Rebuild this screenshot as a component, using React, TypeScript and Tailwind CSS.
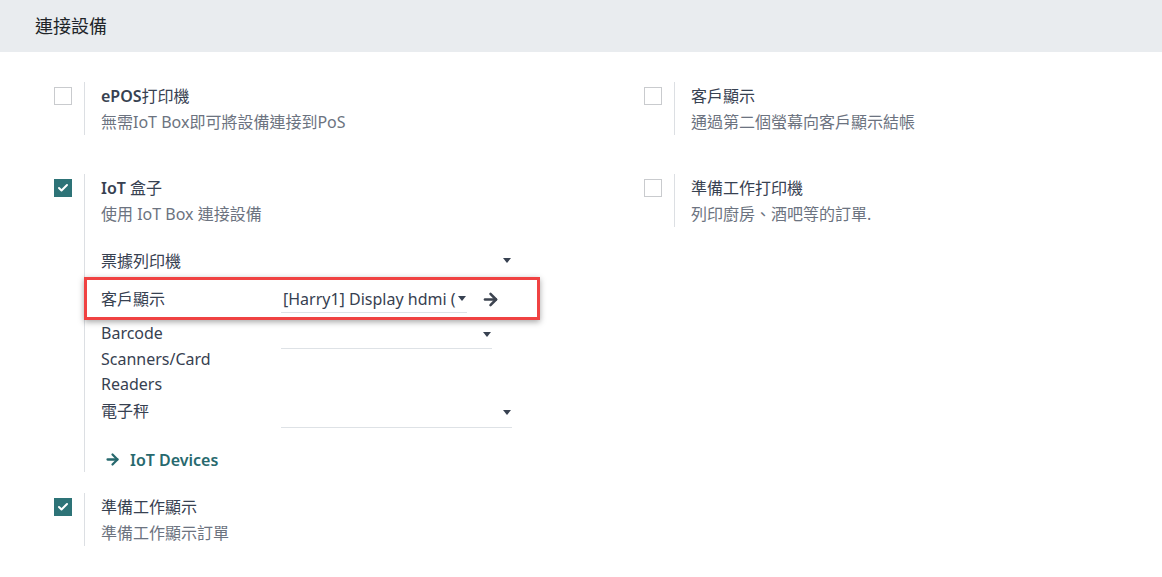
import { Check, ArrowRight } from "lucide-react";
import type { ReactNode } from "react";

function Checkbox({ checked }: { checked?: boolean }) {
  if (checked) {
    return (
      <div className="mt-[5px] flex h-[18px] w-[18px] items-center justify-center bg-[#2d7377]">
        <Check className="h-[12px] w-[12px] text-white" strokeWidth={4} />
      </div>
    );
  }
  return <div className="mt-[5px] h-[18px] w-[18px] border border-[#c9cbce] bg-white" />;
}

function Caret() {
  return (
    <span className="h-0 w-0 border-x-[4px] border-t-[5px] border-x-transparent border-t-[#374151]" />
  );
}

interface SettingProps {
  checked?: boolean;
  title: ReactNode;
  desc: string;
  children?: ReactNode;
}

function Setting({ checked, title, desc, children }: SettingProps) {
  return (
    <div className="flex">
      <div className="w-[30px] shrink-0">
        <Checkbox checked={checked} />
      </div>
      <div className="border-l border-[#dcdfe3] pl-4">
        <div className="pt-px text-[16px] leading-[26px] text-[#374151]">{title}</div>
        <div className="text-[16px] leading-[26px] text-[#6c7380]">{desc}</div>
        {children}
      </div>
    </div>
  );
}

export default function App() {
  return (
    <div className="min-h-[577px] bg-white font-['Noto_Sans','Noto_Sans_CJK_TC',sans-serif] text-[#374151]">
      {/* Section header */}
      <div className="flex h-[52px] items-center bg-[#e9ecef] pl-[35px]">
        <h2 className="text-[18px] text-[#212529]">連接設備</h2>
      </div>

      <div className="grid grid-cols-[590px_1fr] pl-[54px] pt-[30px]">
        {/* Left column */}
        <div className="flex flex-col">
          <Setting
            title={
              <>
                <span className="font-semibold">ePOS</span>打印機
              </>
            }
            desc="無需IoT Box即可將設備連接到PoS"
          />

          <div className="mt-[39px]">
            <Setting
              checked
              title={
                <>
                  <span className="font-semibold">IoT</span> 盒子
                </>
              }
              desc="使用 IoT Box 連接設備"
            >
              <div className="mt-[16px] text-[16px]">
                {/* 票據列印機 */}
                <div className="flex h-[36px] items-center">
                  <div className="w-[180px]">票據列印機</div>
                  <div className="flex h-full w-[231px] items-center justify-end border-b border-[#dee2e6] pr-px">
                    <Caret />
                  </div>
                </div>

                {/* 客戶顯示, highlighted */}
                <div className="relative flex h-[40px] items-center">
                  <div className="w-[180px]">客戶顯示</div>
                  <div className="flex h-[28px] w-[186px] items-center border-b border-[#dee2e6]">
                    <span className="min-w-0 flex-1 overflow-hidden whitespace-nowrap pl-[2px]">
                      [Harry1] Display hdmi (HDMI-A-1)
                    </span>
                    <span className="flex items-center pl-[2px] pr-px">
                      <Caret />
                    </span>
                  </div>
                  <ArrowRight className="ml-[14px] h-[19px] w-[19px] text-[#3d4450]" strokeWidth={3.2} />
                  <div className="pointer-events-none absolute -left-[17px] -top-[2px] h-[43px] w-[456px] border-[3px] border-[#f04242] shadow-[0_2px_6px_rgba(0,0,0,0.35)]" />
                </div>

                {/* Barcode */}
                <div className="mt-[2px] flex items-start">
                  <div className="w-[180px]">
                    <div className="max-w-[130px] leading-[25.5px]">Barcode Scanners/Card Readers</div>
                  </div>
                  <div className="flex h-[28px] w-[211px] items-center justify-end border-b border-[#dee2e6] pr-px">
                    <Caret />
                  </div>
                </div>

                {/* 電子秤 */}
                <div className="flex items-start">
                  <div className="w-[180px] leading-[26px]">電子秤</div>
                  <div className="mt-px flex h-[29px] w-[231px] items-center justify-end border-b border-[#dee2e6] pr-px">
                    <Caret />
                  </div>
                </div>

                <a className="mt-[20px] flex items-center gap-[9px] pl-[3px] font-semibold leading-[24px] text-[#27696e]">
                  <ArrowRight className="h-[17px] w-[17px]" strokeWidth={3.2} />
                  IoT Devices
                </a>
              </div>
            </Setting>
          </div>

          <div className="mt-[21px]">
            <Setting checked title="準備工作顯示" desc="準備工作顯示訂單" />
          </div>
        </div>

        {/* Right column */}
        <div className="flex flex-col">
          <Setting title="客戶顯示" desc="通過第二個螢幕向客戶顯示結帳" />
          <div className="mt-[39px]">
            <Setting title="準備工作打印機" desc="列印廚房、酒吧等的訂單." />
          </div>
        </div>
      </div>
    </div>
  );
}
